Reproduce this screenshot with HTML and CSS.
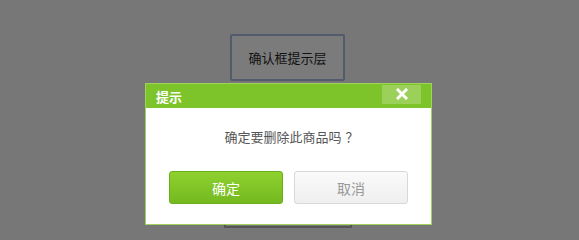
FILE: index.html
```html
<!DOCTYPE html>
<html lang="zh">
<head>
<meta charset="utf-8">
<link rel="stylesheet" href="styles.css">
</head>
<body>
<div class="page">
  <button class="trigger">确认框提示层</button>
  <div class="under">确认框提示层</div>
</div>
<div class="dialog">
  <div class="dialog-head">
    <span class="dialog-title">提示</span>
    <span class="dialog-close">
      <svg width="12" height="12" viewBox="0 0 12 12"><path d="M2 2 L10 10 M10 2 L2 10" stroke="#fff" stroke-width="3" stroke-linecap="square"/></svg>
    </span>
  </div>
  <div class="dialog-body">
    <p class="dialog-msg">确定要删除此商品吗<span class="punct">？</span></p>
    <div class="dialog-actions">
      <button class="btn btn-ok">确定</button>
      <button class="btn btn-cancel">取消</button>
    </div>
  </div>
</div>
</body>
</html>
```
FILE: styles.css
```css
html, body {
  margin: 0;
  padding: 0;
  width: 579px;
  height: 236px;
  overflow: hidden;
  background: #777777;
  font-family: "Noto Sans CJK SC", "Noto Sans", sans-serif;
}
.page {
  display: flex;
  flex-direction: column;
  align-items: flex-start;
  padding-top: 34px;
}
.trigger {
  margin-left: 230px;
  width: 115px;
  height: 47px;
  box-sizing: border-box;
  border: 2px solid #525b6e;
  border-radius: 2px;
  background: #7b7b7b;
  color: #111;
  font-family: inherit;
  font-size: 13px;
  padding: 0;
  line-height: 1;
}
.under {
  margin-left: 224px;
  margin-top: 100px;
  width: 128px;
  height: 47px;
  box-sizing: border-box;
  border: 2px solid #555;
  border-top-color: #666;
  background: #787878;
  color: #8a8a8a;
  font-size: 13px;
  display: flex;
  align-items: flex-start;
  justify-content: center;
  padding-top: 3px;
}
.dialog {
  position: absolute;
  left: 145px;
  top: 83px;
  width: 287px;
  height: 142px;
  box-sizing: border-box;
  border: 1px solid #9ed35c;
  background: #fff;
  display: flex;
  flex-direction: column;
}
.dialog-head {
  height: 24px;
  background: #7dc42b;
  display: flex;
  align-items: center;
  justify-content: space-between;
  padding-left: 10px;
  padding-right: 10px;
}
.dialog-title {
  color: #fff;
  font-weight: bold;
  font-size: 13px;
}
.dialog-close {
  width: 39px;
  height: 19px;
  margin-top: -4px;
  background: #9bd05a;
  display: flex;
  align-items: center;
  justify-content: center;
}
.dialog-body {
  flex: 1;
  display: flex;
  flex-direction: column;
  align-items: center;
}
.dialog-msg {
  margin: 20px 0 0 6px;
  font-size: 13px;
  line-height: 17px;
  color: #555;
}
.punct {
  padding-left: 4px;
}
.dialog-actions {
  display: flex;
  gap: 11px;
  margin-top: 26px;
}
.btn {
  width: 114px;
  height: 33px;
  box-sizing: border-box;
  border-radius: 3px;
  font-family: inherit;
  font-size: 14px;
  padding: 0;
}
.btn-ok {
  background: linear-gradient(#8ed12f, #74b91f);
  border: 1px solid #6aae1a;
  color: #fff;
}
.btn-cancel {
  background: linear-gradient(#fafafa, #efefef);
  border: 1px solid #d8d8d8;
  color: #999;
}
```
